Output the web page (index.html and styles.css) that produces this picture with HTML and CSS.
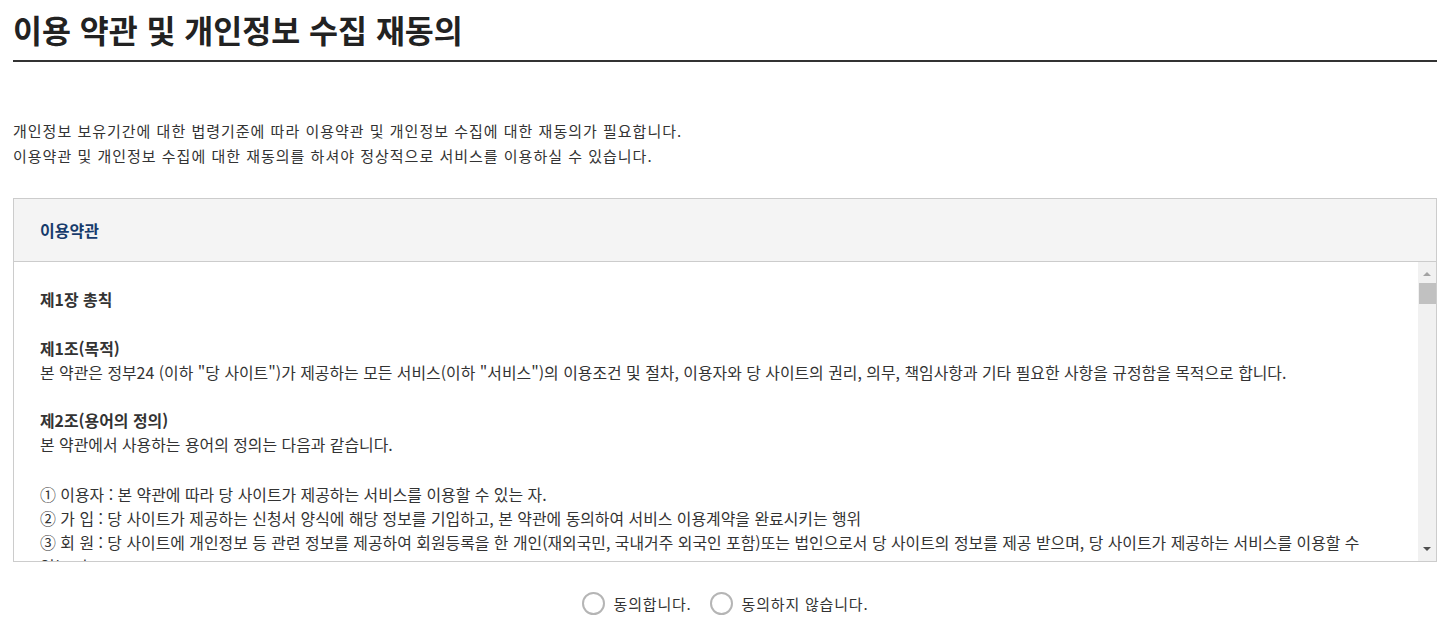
FILE: index.html
```html
<!DOCTYPE html>
<html lang="ko">
<head>
<meta charset="utf-8">
<title>이용 약관 및 개인정보 수집 재동의</title>
<link rel="stylesheet" href="styles.css">
</head>
<body>
<div class="page">
  <h1 class="title">이용 약관 및 개인정보 수집 재동의</h1>
  <div class="intro">
    <p>개인정보 보유기간에 대한 법령기준에 따라 이용약관 및 개인정보 수집에 대한 재동의가 필요합니다.</p>
    <p>이용약관 및 개인정보 수집에 대한 재동의를 하셔야 정상적으로 서비스를 이용하실 수 있습니다.</p>
  </div>
  <div class="terms">
    <div class="terms-head">이용약관</div>
    <div class="terms-view">
      <div class="terms-body">
        <p class="chapter">제1장 총칙</p>
        <p class="article">제1조(목적)</p>
        <p>본 약관은 정부24 (이하 "당 사이트")가 제공하는 모든 서비스(이하 "서비스")의 이용조건 및 절차, 이용자와 당 사이트의 권리, 의무, 책임사항과 기타 필요한 사항을 규정함을 목적으로 합니다.</p>
        <p class="article gap">제2조(용어의 정의)</p>
        <p>본 약관에서 사용하는 용어의 정의는 다음과 같습니다.</p>
        <p class="gap2">① 이용자 : 본 약관에 따라 당 사이트가 제공하는 서비스를 이용할 수 있는 자.</p>
        <p>② 가 입 : 당 사이트가 제공하는 신청서 양식에 해당 정보를 기입하고, 본 약관에 동의하여 서비스 이용계약을 완료시키는 행위</p>
        <p>③ 회 원 : 당 사이트에 개인정보 등 관련 정보를 제공하여 회원등록을 한 개인(재외국민, 국내거주 외국인 포함)또는 법인으로서 당 사이트의 정보를 제공 받으며, 당 사이트가 제공하는 서비스를 이용할 수 있는 자.</p>
        <p>④ 아이디(ID) : 회원의 식별과 서비스 이용을 위하여 회원이 선정하고 당 사이트가 승인하는 문자와 숫자의 조합</p>
        <p>⑤ 비밀번호(Password) : 회원의 정보 보호를 위해 회원 자신이 설정한 문자, 숫자 및 특수문자의 조합</p>
        <p>⑥ 탈 퇴 : 회원이 이용계약을 종료시키는 행위</p>
        <p class="article gap">제3조(약관의 효력과 변경)</p>
        <p>① 당 사이트는 귀하가 본 약관 내용에 동의하는 것을 조건으로 귀하에게 서비스를 제공할 것이며, 귀하가 본 약관의 내용에 동의하는 경우, 당 사이트의 서비스 제공 행위 및 귀하의 서비스 사용 행위에는 본 약관이 우선적으로 적용될 것입니다.</p>
        <p>② 당 사이트는 본 약관을 사전 고지 없이 변경할 수 있으며, 변경된 약관은 당 사이트 내에 공지함으로써 이용자가 직접 확인하도록 할 것입니다.</p>
        <p>③ 이용자가 변경된 약관에 동의하지 않는 경우, 이용자는 본인의 회원등록을 취소(회원탈퇴)할 수 있으며 계속 사용의 경우는 약관 변경에 대한 동의로 간주됩니다.</p>
        <p>④ 변경된 약관은 공지와 동시에 그 효력이 발생됩니다.</p>
        <p class="article gap">제4조(약관 외 준칙)</p>
        <p>① 본 약관은 당 사이트가 제공하는 서비스에 관한 이용규정 및 별도 약관과 함께 적용됩니다.</p>
        <p>② 본 약관에 명시되지 않은 사항이 관계법령에 규정되어 있을 경우에는 그 규정에 따릅니다.</p>
      </div>
      <div class="scrollbar" aria-hidden="true">
        <div class="sb-btn sb-up"></div>
        <div class="sb-track"><div class="sb-thumb"></div></div>
        <div class="sb-btn sb-down"></div>
      </div>
    </div>
  </div>
  <div class="agree">
    <label class="radio"><input type="radio" name="agree"><span class="circle"></span>동의합니다.</label>
    <label class="radio"><input type="radio" name="agree"><span class="circle"></span>동의하지 않습니다.</label>
  </div>
</div>
</body>
</html>
```

FILE: styles.css
```css
* { box-sizing: border-box; }
html, body { margin: 0; padding: 0; background: #fff; }
body {
  font-family: "Noto Sans CJK KR", "Noto Sans", sans-serif;
  color: #333;
}
.page { padding: 0 13px; }
.title {
  margin: 0;
  padding: 10px 0 12px;
  font-size: 31.5px;
  font-weight: 700;
  line-height: 38px;
  color: #222;
  border-bottom: 2px solid #333;
}
.intro {
  margin-top: 56px;
  font-size: 15px;
  letter-spacing: 1px;
  line-height: 25px;
  color: #333;
}
.intro p { margin: 0; }
.terms {
  margin-top: 30px;
  border: 1px solid #ccc;
}
.terms-head {
  height: 63px;
  background: #f4f4f4;
  border-bottom: 1px solid #ccc;
  padding: 0 26px;
  display: flex;
  align-items: center;
  font-size: 16px;
  font-weight: 700;
  color: #173b6c;
}
.terms-view {
  display: flex;
  height: 299px;
}
.terms-body {
  flex: 1;
  min-width: 0;
  overflow: hidden;
  padding: 26px 42px 24px 26px;
  font-size: 15.9px;
  line-height: 24px;
  color: #333;
}
.terms-body p { margin: 0; }
.terms-body .chapter { font-weight: 700; margin-bottom: 25px; }
.terms-body .article { font-weight: 700; }
.terms-body .gap { margin-top: 24px; }
.terms-body .gap2 { margin-top: 26px; }

.scrollbar {
  width: 18px;
  flex: none;
  display: flex;
  flex-direction: column;
  background: #f1f1f1;
}
.sb-btn {
  height: 17px;
  flex: none;
  display: flex;
  justify-content: center;
}
.sb-up { align-items: flex-end; }
.sb-down { align-items: flex-start; }
.sb-up::before {
  content: "";
  border-left: 4px solid transparent;
  border-right: 4px solid transparent;
  border-bottom: 4px solid #a3a3a3;
  margin-bottom: 3px;
}
.sb-down::before {
  content: "";
  border-left: 4px solid transparent;
  border-right: 4px solid transparent;
  border-top: 4px solid #505050;
  margin-top: 3px;
}
.sb-track {
  flex: 1;
  padding: 4px 0 0 1px;
}
.sb-thumb {
  height: 21px;
  background: #c1c1c1;
}

.agree {
  display: flex;
  justify-content: center;
  gap: 18px;
  margin-top: 30px;
  font-size: 15px;
  letter-spacing: 0.8px;
  line-height: 23px;
}
.radio {
  display: flex;
  align-items: center;
  gap: 9px;
  cursor: pointer;
  color: #333;
}
.radio input { display: none; }
.circle {
  width: 23px;
  height: 23px;
  border: 2px solid #b5b5b5;
  border-radius: 50%;
}
```
